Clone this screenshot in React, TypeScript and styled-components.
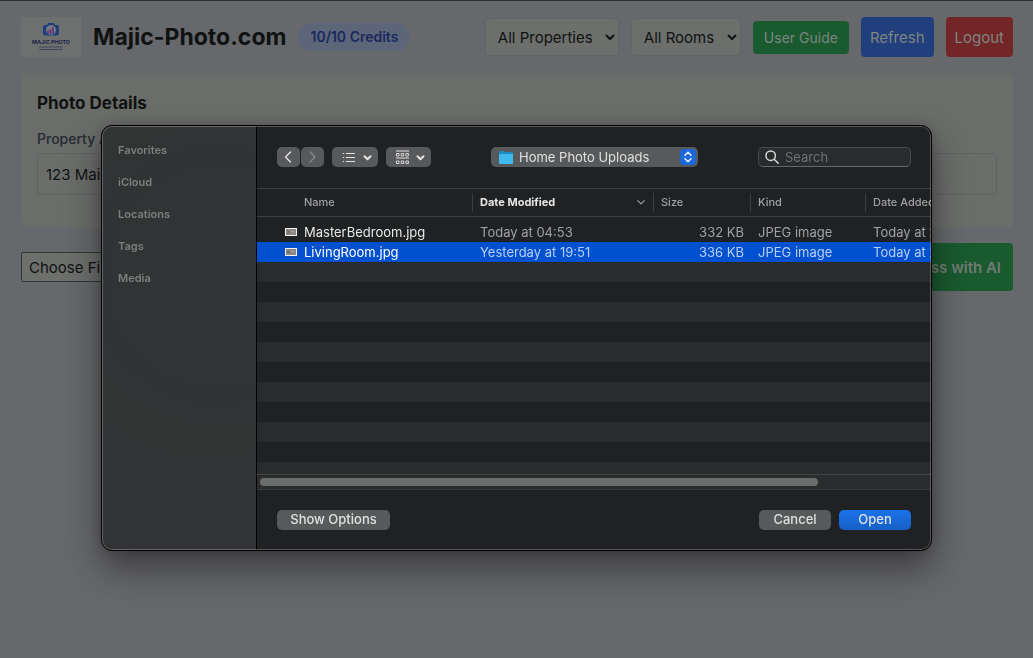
import React from "react";
import styled, { createGlobalStyle } from "styled-components";

const GlobalStyle = createGlobalStyle`
  * { box-sizing: border-box; }
  body {
    margin: 0;
    background: #67686b;
    color: #101211;
    font-family: Inter, "Liberation Sans", sans-serif;
    font-size: 15px;
  }
  button, input, select { font: inherit; color: inherit; margin: 0; }
`;

const Page = styled.div`
  min-height: 100vh;
  border-top: 1px solid #2c2c2e;
  padding: 16px 20px 16px 21px;
`;

const Header = styled.header`
  display: flex;
  align-items: center;
  justify-content: space-between;
  height: 40px;
`;

const Group = styled.div<{ $gap: number }>`
  display: flex;
  align-items: center;
  gap: ${(p) => p.$gap}px;
`;

const Logo = styled.svg`
  display: block;
  width: 60px;
  height: 40px;
  background: #6e706f;
`;

const Title = styled.h1`
  margin: 0;
  font-size: 23px;
  line-height: 32px;
  font-weight: 650;
`;

const Credits = styled.span`
  padding: 4px 12px;
  border-radius: 14px;
  background: #5c6678;
  color: #1b2860;
  font-size: 14px;
  line-height: 20px;
  font-weight: 600;
`;

const FilterSelect = styled.select<{ $width: number }>`
  width: ${(p) => p.$width}px;
  height: 38px;
  padding: 0 0 0 8px;
  border: 1px solid #626467;
  border-radius: 4px;
  background: #6d6f6d;
`;

const HeaderButton = styled.button<{ $bg: string; $small?: boolean }>`
  height: ${(p) => (p.$small ? 33 : 40)}px;
  padding: 0 ${(p) => (p.$small ? 11 : 9)}px;
  border: 0;
  border-radius: 4px;
  background: ${(p) => p.$bg};
  color: #7e8582;
  font-size: ${(p) => (p.$small ? 14 : 15)}px;
`;

const Card = styled.section`
  margin-top: 16px;
  padding: 16px 16px 32px;
  border-radius: 4px;
  background: #6b6d6b;
`;

const CardTitle = styled.h2`
  margin: 0 0 12px;
  font-size: 17px;
  line-height: 28px;
  font-weight: 700;
`;

const Label = styled.label`
  display: block;
  margin-bottom: 4px;
  font-size: 14px;
  line-height: 20px;
  font-weight: 500;
  color: #262a31;
`;

const TextInput = styled.input`
  display: block;
  width: 100%;
  height: 42px;
  padding: 0 8px;
  border: 1px solid #616362;
  border-radius: 4px;
  background: transparent;
`;

const Actions = styled.div`
  display: flex;
  align-items: center;
  justify-content: space-between;
  margin-top: 16px;
`;

const FileButton = styled.button`
  height: 30px;
  padding: 0 7px;
  border: 1px solid #343635;
  border-radius: 2px;
  background: #6d6f6d;
`;

const ProcessButton = styled.button`
  height: 48px;
  padding: 0 12px;
  border: 0;
  border-radius: 4px;
  background: #195a2f;
  color: #727a75;
  font-weight: 600;
`;

const Backdrop = styled.div`
  position: fixed;
  inset: 0;
  display: flex;
  align-items: flex-start;
  justify-content: center;
  padding: 125px 101px 0;
`;

const Dialog = styled.div`
  position: relative;
  display: flex;
  width: 100%;
  max-width: 960px;
  border: 1px solid #000;
  border-radius: 11px;
  overflow: hidden;
  background: #202123;
  color: #dfe0e0;
  font-size: 13px;
  box-shadow: 0 18px 36px rgba(0, 0, 0, 0.42), 0 0 14px rgba(0, 0, 0, 0.2);

  &::after {
    content: "";
    position: absolute;
    inset: 0;
    border: 1px solid rgba(255, 255, 255, 0.25);
    border-radius: 10px;
    pointer-events: none;
  }
`;

const Sidebar = styled.nav`
  display: flex;
  flex-direction: column;
  gap: 16px;
  flex: 0 0 155px;
  padding: 16px;
  border-right: 1px solid #000;
  background: radial-gradient(circle at 75% 35%, #313537, #303434 30%, #323334 65%);
`;

const SidebarHeading = styled.a`
  color: #7d7f7e;
  font-size: 11px;
  line-height: 16px;
  font-weight: 600;
  text-decoration: none;
`;

const Main = styled.div`
  flex: 1;
  min-width: 0;
`;

const Toolbar = styled.div`
  display: flex;
  align-items: center;
  height: 62px;
  padding: 0 20px;
`;

const ToolButton = styled.button<{ $dim?: boolean }>`
  display: flex;
  align-items: center;
  justify-content: center;
  width: 23px;
  height: 20px;
  padding: 0 2px 0 0;
  border: 0;
  border-radius: 5px;
  background: #58595b;
  color: ${(p) => (p.$dim ? "#8a8b8d" : "#e4e4e5")};
`;

const MenuButton = styled(ToolButton)<{ $width: number }>`
  justify-content: space-between;
  width: ${(p) => p.$width}px;
  padding: 0 6px 0 10px;
`;

const LocationPicker = styled.label`
  display: flex;
  align-items: center;
  width: 207px;
  height: 20px;
  margin: 0 auto;
  padding: 0 2px 0 7px;
  gap: 5px;
  border-radius: 5px;
  background: #58595b;

  svg { flex: none; display: block; }
`;

const LocationSelect = styled.select`
  appearance: none;
  flex: 1;
  min-width: 0;
  height: 20px;
  padding: 0;
  border: 0;
  background: transparent;
`;

const SearchBox = styled.label`
  display: flex;
  align-items: center;
  gap: 6px;
  width: 153px;
  height: 20px;
  padding: 0 6px;
  border: 1px solid #48494b;
  border-bottom-color: #67686a;
  border-radius: 5px;
  background: #2a2b2d;

  svg { flex: none; }
`;

const SearchInput = styled.input`
  flex: 1;
  min-width: 0;
  padding: 0;
  border: 0;
  outline: 0;
  background: transparent;
  &::placeholder { color: #707173; opacity: 1; }
`;

const FileList = styled.div`
  height: 286px;
  overflow: hidden;
  border-top: 1px solid #3d3e40;
  background: repeating-linear-gradient(#202123 0 20px, #2a2b2d 20px 40px) 0 13px;
`;

const Table = styled.table`
  width: 100%;
  min-width: 806px;
  table-layout: fixed;
  border-collapse: separate;
  border-spacing: 0;
  background: linear-gradient(#202123, #202123) 0 0 / 100% 93px no-repeat;

  tbody::before { content: ""; display: block; height: 5px; }
`;

const HeadCell = styled.th<{ $active?: boolean; $first?: boolean }>`
  height: 28px;
  padding: 0 7px 0 ${(p) => (p.$first ? 47 : 0)}px;
  border-bottom: 1px solid #3d3e40;
  text-align: left;
  font-size: 11px;
  font-weight: ${(p) => (p.$active ? 700 : 500)};
  color: ${(p) => (p.$active ? "#e6e6e6" : "#a0a1a2")};
`;

const HeadLabel = styled.div<{ $divided: boolean }>`
  display: flex;
  align-items: center;
  justify-content: space-between;
  height: 19px;
  padding: 0 0 2px ${(p) => (p.$divided ? 7 : 0)}px;
  border-left: ${(p) => (p.$divided ? "1px solid #3d3e40" : "0")};

  svg { color: #a0a1a2; }
`;

const Row = styled.tr<{ $selected?: boolean }>`
  background: ${(p) => (p.$selected ? "#0050cf" : "transparent")};
  color: ${(p) => (p.$selected ? "#b9cff2" : "#a0a1a2")};
`;

const Cell = styled.td<{ $end?: boolean }>`
  height: 20px;
  padding: 0 ${(p) => (p.$end ? 6 : 0)}px 0 8px;
  line-height: 20px;
  text-align: ${(p) => (p.$end ? "right" : "left")};
  white-space: nowrap;
`;

const NameCell = styled(Cell)<{ $selected?: boolean }>`
  padding-left: 28px;
  color: ${(p) => (p.$selected ? "#fff" : "#e6e7e7")};
`;

const FileName = styled.div`
  display: flex;
  align-items: center;
  gap: 7px;
`;

const Thumb = styled.svg`
  display: block;
  width: 12px;
  height: 8px;
`;

const ScrollTrack = styled.div`
  height: 16px;
  padding: 3px;
  border-top: 1px solid #434446;
  border-bottom: 1px solid #38393b;
  background: #2b2c2e;
`;

const ScrollThumb = styled.div`
  width: 83.5%;
  height: 8px;
  border-radius: 4px;
  background: #6c6e6c;
`;

const Footer = styled.footer`
  display: flex;
  align-items: center;
  gap: 8px;
  height: 60px;
  padding: 0 20px;
`;

const FooterButton = styled.button<{ $primary?: boolean; $width: number }>`
  width: ${(p) => p.$width}px;
  height: 20px;
  padding: 0 0 2px;
  border: 0;
  border-radius: 5px;
  background: ${(p) => (p.$primary ? "linear-gradient(#1a73ea, #165fc6)" : "#58595b")};
  font-weight: 500;
  line-height: 18px;
`;

const Spacer = styled.div`
  flex: 1;
`;

const Chevron = ({ size = 9, weight = 2 }: { size?: number; weight?: number }) => (
  <svg width={size} height={size} viewBox="0 0 9 9" fill="none" stroke="currentColor" strokeWidth={weight} strokeLinecap="round" strokeLinejoin="round">
    <path d="M1.500 3.200 4.500 6.200 7.500 3.200" />
  </svg>
);

const files = [
  { name: "MasterBedroom.jpg", modified: "Today at 04:53", size: "332 KB", added: "Today at 20:14" },
  { name: "LivingRoom.jpg", modified: "Yesterday at 19:51", size: "336 KB", added: "Today at 20:14", selected: true },
];

const columns = [
  { label: "Name", width: 215 },
  { label: "Date Modified", width: 181, active: true },
  { label: "Size", width: 97 },
  { label: "Kind", width: 115 },
  { label: "Date Added", width: 198 },
];

const places = ["Favorites", "iCloud", "Locations", "Tags", "Media"];

export default function App() {
  return (
    <>
      <GlobalStyle />
      <Page>
        <Header>
          <Group $gap={12}>
            <Logo viewBox="0 0 60 40" role="img" aria-label="Majic Photo">
              <path d="M23.500 8H26l1-2h6l1 2h2.500q1.500 0 1.500 2v6.500q0 2-2 2H24q-2 0-2-2V10q0-2 1.500-2Z" fill="#1d4079" />
              <circle cx="30" cy="13" r="5" fill="#777985" />
              <path d="M27 14v2.500M29.500 12v5.500M32 10v7" stroke="#5a2e78" strokeWidth="1.600" />
              <path d="M26 14q5-1 7-5" stroke="#8a4a6c" strokeWidth=".8" fill="none" />
              <text x="30" y="27" textAnchor="middle" fontSize="5.400" fontWeight="700" fill="#1c2548">MAJIC PHOTO</text>
              <path d="M18.500 30h23M18.500 32.500h23" stroke="#343b52" strokeWidth="1" strokeDasharray="2 .6" />
            </Logo>
            <Title>Majic-Photo.com</Title>
            <Credits>10/10 Credits</Credits>
          </Group>
          <Group $gap={12}>
            <FilterSelect $width={134} aria-label="Property"><option>All Properties</option></FilterSelect>
            <FilterSelect $width={110} aria-label="Room"><option>All Rooms</option></FilterSelect>
            <HeaderButton $bg="#195a2f" $small>User Guide</HeaderButton>
            <HeaderButton $bg="#213f7c">Refresh</HeaderButton>
            <HeaderButton $bg="#732628">Logout</HeaderButton>
          </Group>
        </Header>

        <Card>
          <CardTitle>Photo Details</CardTitle>
          <Label htmlFor="address">Property Address</Label>
          <TextInput id="address" defaultValue="123 Main Street" />
        </Card>

        <Actions>
          <FileButton>Choose Files</FileButton>
          <ProcessButton>Process with AI</ProcessButton>
        </Actions>
      </Page>

      <Backdrop>
        <Dialog role="dialog" aria-label="Open file">
          <Sidebar>
            {places.map((p) => <SidebarHeading key={p} href="#">{p}</SidebarHeading>)}
          </Sidebar>
          <Main>
            <Toolbar>
              <Group $gap={8}>
                <Group $gap={1}>
                  <ToolButton aria-label="Back">
                    <svg width="8" height="12" viewBox="0 0 8 12" fill="none" stroke="currentColor" strokeWidth="1.400" strokeLinecap="round" strokeLinejoin="round"><path d="M6.500 1 1.500 6 6.500 11" /></svg>
                  </ToolButton>
                  <ToolButton $dim aria-label="Forward">
                    <svg width="8" height="12" viewBox="0 0 8 12" fill="none" stroke="currentColor" strokeWidth="1.200" strokeLinecap="round" strokeLinejoin="round"><path d="M2 1 7 6 2 11" /></svg>
                  </ToolButton>
                </Group>
                <MenuButton $width={46} aria-label="List view">
                  <svg width="13" height="11" viewBox="0 0 13 11" stroke="currentColor" strokeWidth="1"><path d="M4 1.500h9M4 5.500h9M4 9.500h9M.8 1.500h1.400M.8 5.500h1.400M.8 9.500h1.400" /></svg>
                  <Chevron />
                </MenuButton>
                <MenuButton $width={45} aria-label="Group items">
                  <svg width="13" height="15" viewBox="0 0 13 15" fill="none" stroke="currentColor"><path d="M0 1h13M0 8h13" /><path d="M.5 3.500h2.500v2.500H.5zM5.200 3.500h2.500v2.500H5.200zM9.900 3.500h2.500v2.500H9.900zM.5 11h2.500v2.500H.5zM5.200 11h2.500v2.500H5.200zM9.900 11h2.500v2.500H9.900z" strokeWidth=".9" /></svg>
                  <Chevron />
                </MenuButton>
              </Group>
              <LocationPicker>
                <svg width="16" height="14" viewBox="0 0 16 14">
                  <path d="M1 2q0-1 1-1h3.500l1 1H14q1 0 1 1v10q0 1-1 1H2q-1 0-1-1Z" fill="#1b8fc4" />
                  <path d="M1 4h14v9q0 1-1 1H2q-1 0-1-1Z" fill="#40b9f0" />
                </svg>
                <LocationSelect aria-label="Location"><option>Home Photo Uploads</option></LocationSelect>
                <svg width="16" height="16" viewBox="0 0 16 16">
                  <rect width="16" height="16" rx="4" fill="#1967da" />
                  <path d="m5 6.300 3-3 3 3M5 9.700l3 3 3-3" fill="none" stroke="#e7edf7" strokeWidth="1.600" strokeLinecap="round" strokeLinejoin="round" />
                </svg>
              </LocationPicker>
              <SearchBox>
                <svg width="14" height="14" viewBox="0 0 14 14" fill="none" stroke="#d5d6d6" strokeWidth="1.500" strokeLinecap="round"><circle cx="5.700" cy="5.700" r="4.700" /><path d="m9.200 9.200 4 4" /></svg>
                <SearchInput placeholder="Search" aria-label="Search" />
              </SearchBox>
            </Toolbar>

            <FileList>
              <Table>
                <colgroup>{columns.map((c) => <col key={c.label} style={{ width: c.width }} />)}</colgroup>
                <thead>
                  <tr>
                    {columns.map((c, i) => (
                      <HeadCell key={c.label} $active={c.active} $first={i === 0}>
                        <HeadLabel $divided={i > 0}>{c.label}{c.active && <Chevron weight={1} size={10} />}</HeadLabel>
                      </HeadCell>
                    ))}
                  </tr>
                </thead>
                <tbody>
                  {files.map((f) => (
                    <Row key={f.name} $selected={f.selected}>
                      <NameCell $selected={f.selected}>
                        <FileName>
                          <Thumb viewBox="0 0 12 8">
                            <rect x=".5" y=".5" width="11" height="7" fill="#8b8784" stroke="#f0f0f0" />
                            <path d="M2 3h3v2H2z" fill="#6d747c" /><path d="M6 3h3v1H6z" fill="#aaa49d" />
                          </Thumb>
                          {f.name}
                        </FileName>
                      </NameCell>
                      <Cell>{f.modified}</Cell>
                      <Cell $end>{f.size}</Cell>
                      <Cell>JPEG image</Cell>
                      <Cell>{f.added}</Cell>
                    </Row>
                  ))}
                </tbody>
              </Table>
            </FileList>
            <ScrollTrack><ScrollThumb /></ScrollTrack>

            <Footer>
              <FooterButton $width={113}>Show Options</FooterButton>
              <Spacer />
              <FooterButton $width={72}>Cancel</FooterButton>
              <FooterButton $width={72} $primary>Open</FooterButton>
            </Footer>
          </Main>
        </Dialog>
      </Backdrop>
    </>
  );
}
